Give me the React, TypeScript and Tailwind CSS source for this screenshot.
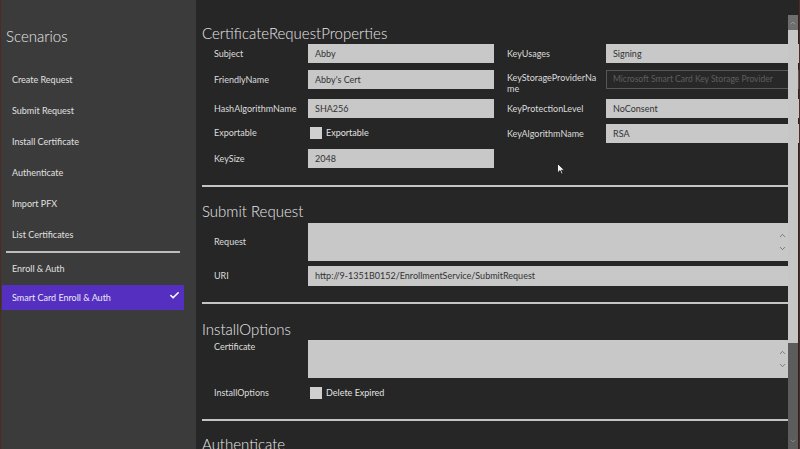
import { Check, ChevronDown, ChevronUp } from "lucide-react";

const scenarios = [
  "Create Request",
  "Submit Request",
  "Install Certificate",
  "Authenticate",
  "Import PFX",
  "List Certificates",
];

function Field({ value }: { value: string }) {
  return (
    <div className="flex h-[19px] flex-1 items-center bg-[#c8c8c8] px-[7px] text-[9px] text-[#333]">
      {value}
    </div>
  );
}

function Select({ value }: { value: string }) {
  return (
    <div className="flex h-[19px] flex-1 items-center justify-between bg-[#c8c8c8] pl-[7px] pr-[2px] text-[9px] text-[#333]">
      <span>{value}</span>
      <ChevronDown size={10} strokeWidth={3} className="text-[#333]" />
    </div>
  );
}

function Box({ text }: { text: string }) {
  return (
    <div className="flex items-center gap-[4px] text-[9px] text-[#e2e2e2]">
      <span className="h-[12px] w-[12px] bg-[#cfcfcf]" />
      {text}
    </div>
  );
}

function TextArea() {
  return (
    <div className="flex h-[38px] flex-1 flex-col items-end justify-center bg-[#c8c8c8] pr-[1px] text-[#5e5e5e]">
      <ChevronUp size={9} strokeWidth={2} />
      <ChevronDown size={9} strokeWidth={2} className="mt-[4px]" />
    </div>
  );
}

function Row({ label, w, children }: { label: string; w: string; children: React.ReactNode }) {
  return (
    <div className="flex h-[19px] items-center">
      <span className={`${w} shrink-0 text-[9px] leading-[12px] text-[#dcdcdc]`}>{label}</span>
      {children}
    </div>
  );
}

function Heading({ children }: { children: React.ReactNode }) {
  return <h2 className="text-[15px] font-light leading-[22px] text-[#e8e8e8]">{children}</h2>;
}

export default function App() {
  return (
    <div className="flex h-[449px] w-[800px] overflow-hidden border-x border-[#4d2a22] bg-[#262626] font-['Lato',sans-serif]">
      <aside className="flex w-[195px] shrink-0 flex-col bg-[#3b3b3b]">
        <h1 className="mt-[25px] pl-[5px] text-[15px] font-light leading-[22px] text-[#e6e6e6]">Scenarios</h1>
        <ul className="mt-[17px]">
          {scenarios.map((s) => (
            <li key={s} className="flex h-[31px] items-center pl-[11px] text-[9px] text-[#e0e0e0]">
              {s}
            </li>
          ))}
        </ul>
        <div className="ml-[5px] mt-[1px] h-[2px] w-[174px] bg-[#bdbdbd]" />
        <div className="flex h-[32px] items-center pl-[11px] text-[9px] text-[#e0e0e0]">Enroll &amp; Auth</div>
        <div className="ml-[1px] flex h-[25px] w-[182px] items-center justify-between bg-[#5530c0] pl-[10px] pr-[4px] text-[9px] text-[#ece8f8]">
          <span>Smart Card Enroll &amp; Auth</span>
          <Check size={11} strokeWidth={3.5} className="mb-[4px] text-white" />
        </div>
      </aside>

      <main className="relative flex-1 pl-[6px] pt-[22px]">
        <Heading>CertificateRequestProperties</Heading>
        <div className="flex pl-[12px]">
          <div className="flex w-[280px] flex-col">
            <Row label="Subject" w="w-[94px]">
              <Field value="Abby" />
            </Row>
            <div className="mt-[7px]">
              <Row label="FriendlyName" w="w-[94px]">
                <Field value="Abby's Cert" />
              </Row>
            </div>
            <div className="mt-[10px]">
              <Row label="HashAlgorithmName" w="w-[94px]">
                <Field value="SHA256" />
              </Row>
            </div>
            <div className="mt-[5px]">
              <Row label="Exportable" w="w-[96px]">
                <Box text="Exportable" />
              </Row>
            </div>
            <div className="mt-[7px]">
              <Row label="KeySize" w="w-[94px]">
                <Field value="2048" />
              </Row>
            </div>
          </div>
          <div className="ml-[13px] flex flex-1 flex-col">
            <Row label="KeyUsages" w="w-[99px]">
              <Select value="Signing" />
            </Row>
            <div className="mt-[7px] flex h-[19px] items-center">
              <span className="w-[99px] shrink-0 whitespace-nowrap pt-[6px] text-[9px] leading-[11px] text-[#dcdcdc]">
                KeyStorageProviderNa
                <br />
                me
              </span>
              <div className="flex h-[19px] flex-1 items-center overflow-hidden whitespace-nowrap border border-[#575757] bg-[#282828] px-[6px] text-[8.5px] text-[#5f5f5f]">
                Microsoft Smart Card Key Storage Provider
              </div>
            </div>
            <div className="mt-[10px]">
              <Row label="KeyProtectionLevel" w="w-[99px]">
                <Select value="NoConsent" />
              </Row>
            </div>
            <div className="mt-[6px]">
              <Row label="KeyAlgorithmName" w="w-[99px]">
                <Field value="RSA" />
              </Row>
            </div>
          </div>
        </div>

        <div className="mr-[11px] mt-[17px] h-[2px] bg-[#c4c4c4]" />

        <div className="mt-[13px]">
          <Heading>Submit Request</Heading>
        </div>
        <div className="mr-[11px] flex pl-[12px]">
          <div className="flex h-[39px] flex-1 items-center">
            <span className="w-[94px] shrink-0 text-[9px] text-[#dcdcdc]">Request</span>
            <TextArea />
          </div>
        </div>
        <div className="mr-[11px] mt-[5px] flex h-[20px] items-center pl-[12px]">
          <span className="w-[94px] shrink-0 text-[9px] text-[#dcdcdc]">URI</span>
          <div className="flex h-[20px] flex-1 items-center bg-[#c8c8c8] px-[7px] text-[9px] text-[#333]">
            http://9-1351B0152/EnrollmentService/SubmitRequest
          </div>
        </div>

        <div className="mr-[11px] mt-[16px] h-[2px] bg-[#c4c4c4]" />

        <div className="mt-[14px]">
          <Heading>InstallOptions</Heading>
        </div>
        <div className="mr-[11px] flex pl-[12px]">
          <span className="w-[94px] shrink-0 pt-[1px] text-[9px] leading-[12px] text-[#dcdcdc]">Certificate</span>
          <TextArea />
        </div>
        <div className="mt-[8px] flex h-[14px] items-center pl-[12px]">
          <span className="w-[96px] shrink-0 text-[9px] text-[#dcdcdc]">InstallOptions</span>
          <Box text="Delete Expired" />
        </div>

        <div className="mr-[11px] mt-[19px] h-[2px] bg-[#c4c4c4]" />

        <div className="mt-[12px]">
          <Heading>Authenticate</Heading>
        </div>

        <svg className="absolute left-[361px] top-[163px]" width="8" height="12" viewBox="0 0 8 12">
          <path d="M0.5 0.5 L0.5 10 L3 7.6 L4.6 11.2 L6 10.6 L4.5 7.2 L7.5 7.2 Z" fill="#f2f2f2" stroke="#111" strokeWidth="0.8" />
        </svg>

        <div className="absolute bottom-0 right-[1px] top-[15px] flex w-[10px] flex-col bg-[#5c5c5c]">
          <div className="flex h-[15px] items-center justify-center bg-[#6e6e6e] text-[#a8a8a8]">
            <ChevronUp size={8} strokeWidth={2} />
          </div>
          <div className="h-[313px] bg-[#c6c6c6]" />
          <div className="flex-1" />
          <div className="flex h-[16px] items-center justify-center text-[#9a9a9a]">
            <ChevronDown size={8} strokeWidth={2} />
          </div>
        </div>
      </main>
    </div>
  );
}
